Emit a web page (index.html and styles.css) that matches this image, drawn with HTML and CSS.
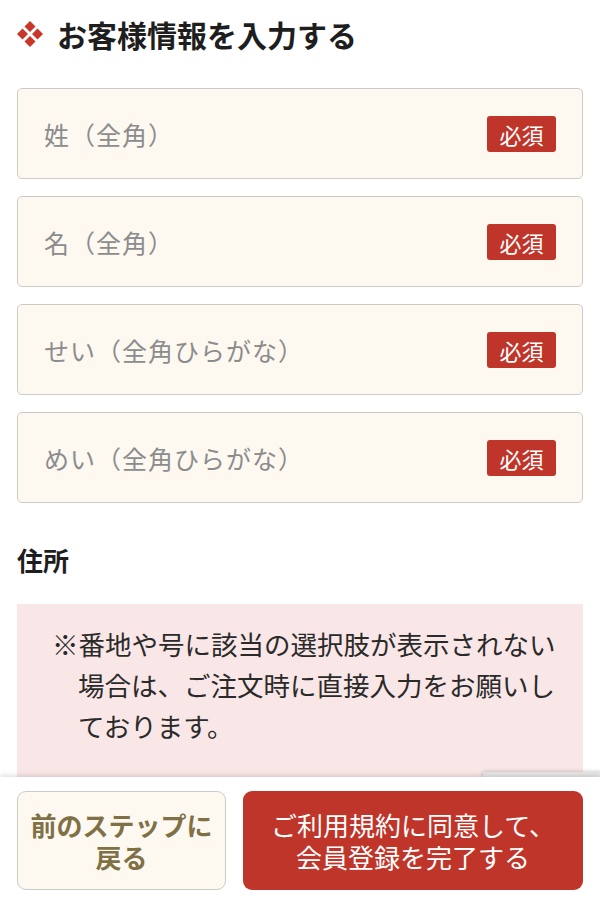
FILE: index.html
```html
<!DOCTYPE html>
<html lang="ja">
<head>
<meta charset="utf-8">
<title>お客様情報を入力する</title>
<link rel="stylesheet" href="styles.css">
</head>
<body>
<main class="page">
  <h1 class="title">
    <svg class="title-icon" viewBox="0 0 26 26" aria-hidden="true">
      <polygon points="13,0 18.5,5.5 13,11 7.5,5.5"/>
      <polygon points="20.5,7.5 26,13 20.5,18.5 15,13"/>
      <polygon points="13,15 18.5,20.5 13,26 7.5,20.5"/>
      <polygon points="5.5,7.5 11,13 5.5,18.5 0,13"/>
    </svg>
    <span>お客様情報を入力する</span>
  </h1>

  <div class="fields">
    <label class="field"><span class="placeholder">姓（全角）</span><span class="badge">必須</span></label>
    <label class="field"><span class="placeholder">名（全角）</span><span class="badge">必須</span></label>
    <label class="field"><span class="placeholder">せい（全角ひらがな）</span><span class="badge">必須</span></label>
    <label class="field"><span class="placeholder">めい（全角ひらがな）</span><span class="badge">必須</span></label>
  </div>

  <h2 class="section">住所</h2>

  <div class="notice">
    <p class="notice-text">※番地や号に該当の選択肢が表示されない<br>場合は、ご注文時に直接入力をお願いし<br>ております。</p>
  </div>
</main>

<div class="badge-float"></div>

<footer class="actionbar">
  <button class="btn btn-back"><span class="btn-line">前のステップに</span><span class="btn-line">戻る</span></button>
  <button class="btn btn-submit"><span class="btn-line">ご利用規約に同意して、</span><span class="btn-line">会員登録を完了する</span></button>
</footer>
</body>
</html>
```

FILE: styles.css
```css
* { box-sizing: border-box; }

html, body {
  margin: 0;
  padding: 0;
  background: #ffffff;
  font-family: "Noto Sans CJK JP", "Noto Sans", sans-serif;
  color: #222222;
}

.page {
  padding: 14px 17px 200px;
}

.title {
  display: flex;
  align-items: center;
  gap: 14px;
  margin: 0;
  font-size: 30px;
  font-weight: 700;
  line-height: 40px;
  color: #1e1e1e;
}

.title-icon {
  width: 26px;
  height: 26px;
  fill: #c8372a;
  flex: none;
}

.fields {
  display: flex;
  flex-direction: column;
  gap: 17px;
  margin-top: 34px;
}

.field {
  display: flex;
  align-items: center;
  justify-content: space-between;
  height: 91px;
  padding: 0 26px 0 26px;
  background: #fdf9f1;
  border: 1.5px solid #cdcbc6;
  border-radius: 5px;
}

.placeholder {
  font-size: 25px;
  color: #8c8c8c;
  letter-spacing: 1px;
}

.badge {
  display: flex;
  align-items: center;
  justify-content: center;
  width: 69px;
  height: 36px;
  background: #c0352a;
  color: #ffffff;
  font-size: 22px;
  border-radius: 3px;
}

.section {
  margin: 37px 0 0;
  font-size: 26px;
  font-weight: 700;
  line-height: 40px;
  color: #1e1e1e;
}

.notice {
  margin-top: 24px;
  background: #f9e6e7;
  padding: 19px 10px 60px 35px;
}

.notice-text {
  margin: 0;
  padding-left: 26px;
  text-indent: -26px;
  font-size: 26.5px;
  line-height: 41px;
  color: #2a2a2a;
  white-space: nowrap;
}

.badge-float {
  position: fixed;
  right: -20px;
  bottom: 122px;
  width: 137px;
  height: 6px;
  background: #e6e6e6;
  box-shadow: 0 0 4px rgba(0,0,0,0.25);
  z-index: 1;
}

.actionbar {
  position: fixed;
  left: 0;
  right: 0;
  bottom: 0;
  height: 123px;
  display: flex;
  gap: 17px;
  padding: 14px 17px 10px;
  background: #ffffff;
  box-shadow: 0 -2px 5px rgba(0,0,0,0.12);
  z-index: 2;
}

.btn {
  display: flex;
  flex-direction: column;
  align-items: center;
  justify-content: center;
  font-family: inherit;
  font-size: 26px;
  border-radius: 9px;
  padding: 0;
  cursor: pointer;
}

.btn-line {
  display: block;
  line-height: 32px;
  height: 32px;
}

.btn-back {
  width: 209px;
  background: #fdf9f1;
  border: 1.5px solid #cdcbc6;
  color: #7f7045;
  font-weight: 700;
}

.btn-submit {
  flex: 1;
  background: #c0352a;
  border: none;
  color: #ffffff;
  font-weight: 400;
}
```
